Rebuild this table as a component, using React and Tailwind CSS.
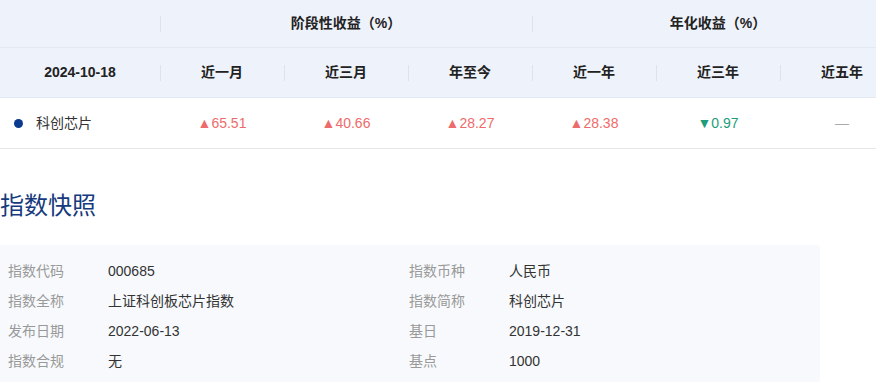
import React from "react";

const cols = [
  { label: "近一月", value: "65.51", up: true },
  { label: "近三月", value: "40.66", up: true },
  { label: "年至今", value: "28.27", up: true },
  { label: "近一年", value: "28.38", up: true },
  { label: "近三年", value: "0.97", up: false },
  { label: "近五年", value: null },
];

const info = [
  ["指数代码", "000685", "指数币种", "人民币"],
  ["指数全称", "上证科创板芯片指数", "指数简称", "科创芯片"],
  ["发布日期", "2022-06-13", "基日", "2019-12-31"],
  ["指数合规", "无", "基点", "1000"],
];

const Divider = () => (
  <span className="absolute left-0 top-1/2 -translate-y-1/2 h-[16px] w-px bg-[#dde2ec]" />
);

const App = () => {
  return (
    <div
      className="w-[876px] h-[382px] overflow-hidden bg-white text-[14px] text-[#333]"
      style={{ fontFamily: '"Liberation Sans", "Noto Sans CJK SC", sans-serif' }}
    >
      {/* Performance table */}
      <div className="w-[904px]">
        <div className="flex h-[48px] bg-[#eef2fb] border-b border-[#e3e8f2] font-bold text-[#222]">
          <div className="w-[160px]" />
          <div className="relative w-[372px] flex items-center justify-center">
            <Divider />
            阶段性收益（%）
          </div>
          <div className="relative w-[372px] flex items-center justify-center">
            <Divider />
            年化收益（%）
          </div>
        </div>
        <div className="flex h-[50px] bg-[#eef2fb] border-b border-[#e3e8f2] font-bold text-[#222]">
          <div className="w-[160px] flex items-center justify-center">2024-10-18</div>
          {cols.map((c) => (
            <div key={c.label} className="relative w-[124px] flex items-center justify-center">
              <Divider />
              {c.label}
            </div>
          ))}
        </div>
        <div className="flex h-[51px] border-b border-[#e6e6e6]">
          <div className="w-[160px] flex items-center pl-[14px] gap-[13px]">
            <span className="w-[9px] h-[9px] rounded-full bg-[#0b3a8f]" />
            <span>科创芯片</span>
          </div>
          {cols.map((c) => (
            <div
              key={c.label}
              className={`w-[124px] flex items-center justify-center ${
                c.value === null ? "text-[#aaa]" : c.up ? "text-[#ee6b6b]" : "text-[#1d9d78]"
              }`}
            >
              {c.value === null ? (
                "—"
              ) : (
                <>
                  <span className="text-[14px]">{c.up ? "▲" : "▼"}</span>
                  {c.value}
                </>
              )}
            </div>
          ))}
        </div>
      </div>

      {/* Snapshot */}
      <h2 className="mt-[40px] text-[24px] leading-[34px] text-[#163a7d]">指数快照</h2>
      <div className="mt-[22px] w-[820px] rounded-tr-[4px] bg-[#f7f9fc] pt-[11px] pb-[10px]">
        {info.map((r) => (
          <div key={r[0]} className="flex h-[30px] items-center">
            <div className="w-[400px] flex pl-[8px]">
              <span className="w-[100px] text-[#999]">{r[0]}</span>
              <span>{r[1]}</span>
            </div>
            <div className="w-[400px] flex pl-[9px]">
              <span className="w-[100px] text-[#999]">{r[2]}</span>
              <span>{r[3]}</span>
            </div>
          </div>
        ))}
      </div>
    </div>
  );
};

export default App;
